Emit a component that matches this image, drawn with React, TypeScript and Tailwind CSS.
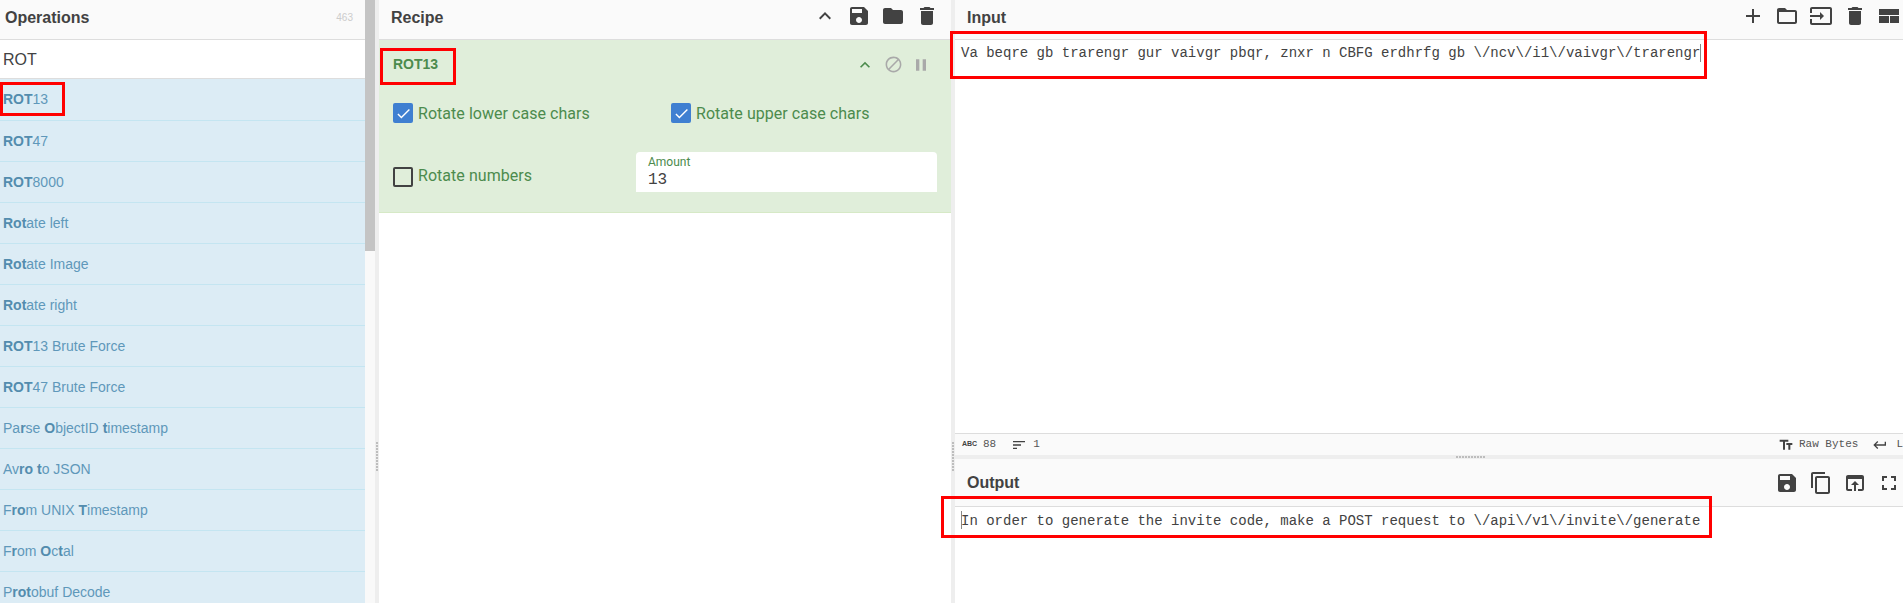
import React from "react";

const P = {
  save: "M17 3H5c-1.11 0-2 .9-2 2v14c0 1.1.89 2 2 2h14c1.1 0 2-.9 2-2V7l-4-4zm-5 16c-1.66 0-3-1.34-3-3s1.34-3 3-3 3 1.34 3 3-1.34 3-3 3zm3-10H5V5h10v4z",
  folder: "M10 4H4c-1.1 0-1.99.9-1.99 2L2 18c0 1.1.9 2 2 2h16c1.1 0 2-.9 2-2V8c0-1.1-.9-2-2-2h-8l-2-2z",
  del: "M6 19c0 1.1.9 2 2 2h8c1.1 0 2-.9 2-2V7H6v12zM19 4h-3.5l-1-1h-5l-1 1H5v2h14V4z",
  less: "M12 8l-6 6 1.41 1.41L12 10.83l4.59 4.58L18 14z",
  block: "M12 2C6.48 2 2 6.48 2 12s4.48 10 10 10 10-4.48 10-10S17.52 2 12 2zM4 12c0-4.42 3.58-8 8-8 1.85 0 3.55.63 4.9 1.69L5.69 16.9C4.63 15.55 4 13.85 4 12zm8 8c-1.85 0-3.55-.63-4.9-1.69L18.31 7.1C19.37 8.45 20 10.15 20 12c0 4.42-3.58 8-8 8z",
  pause: "M6 19h4V5H6v14zm8-14v14h4V5h-4z",
  add: "M19 13h-6v6h-2v-6H5v-2h6V5h2v6h6v2z",
  open: "M20 6h-8l-2-2H4c-1.1 0-1.99.9-1.99 2L2 18c0 1.1.9 2 2 2h16c1.1 0 2-.9 2-2V8c0-1.1-.9-2-2-2zm0 12H4V8h16v10z",
  input: "M21 3.01H3c-1.1 0-2 .9-2 2V9h2V4.99h18v14.03H3V15H1v4.01c0 1.1.9 1.98 2 1.98h18c1.1 0 2-.88 2-1.98v-14c0-1.11-.9-2-2-2zM11 16l4-4-4-4v3H1v2h10v3z",
  layout: "M2 5h20v6H2zM2 12h10v7H2zM13 12h9v7h-9z",
  copy: "M16 1H4c-1.1 0-2 .9-2 2v14h2V3h12V1zm3 4H8c-1.1 0-2 .9-2 2v14c0 1.1.9 2 2 2h11c1.1 0 2-.9 2-2V7c0-1.1-.9-2-2-2zm0 16H8V7h11v14z",
  browser: "M19 4H5c-1.11 0-2 .9-2 2v12c0 1.1.89 2 2 2h4v-2H5V8h14v10h-4v2h4c1.1 0 2-.9 2-2V6c0-1.1-.89-2-2-2zm-7 6l-4 4h3v6h2v-6h3l-4-4z",
  full: "M7 14H5v5h5v-2H7v-3zm-2-4h2V7h3V5H5v5zm12 7h-3v2h5v-5h-2v3zM14 5v2h3v3h2V5h-5z",
  text: "M2.5 4v3h5v12h3V7h5V4h-13zm19 5h-9v3h3v7h3v-7h3V9z",
  ret: "M19 7v4H5.83l3.58-3.59L8 6l-6 6 6 6 1.41-1.41L5.83 13H21V7z",
  sort: "M3 18h6v-2H3v2zM3 6v2h18V6H3zm0 7h12v-2H3v2z",
  check: "M9 16.17L4.83 12l-1.42 1.41L9 19 21 7l-1.41-1.41z",
};

function Icon({ d, size = 24, className = "" }: { d: string; size?: number; className?: string }) {
  return (
    <svg width={size} height={size} viewBox="0 0 24 24" fill="currentColor" className={"shrink-0 " + className}>
      <path d={d} />
    </svg>
  );
}

function Btn({ d }: { d: string }) {
  return (
    <span className="flex w-[34px] justify-center text-[#424242]">
      <Icon d={d} />
    </span>
  );
}

const rows: [string, boolean][][] = [
  [["ROT", true], ["13", false]],
  [["ROT", true], ["47", false]],
  [["ROT", true], ["8000", false]],
  [["Rot", true], ["ate left", false]],
  [["Rot", true], ["ate Image", false]],
  [["Rot", true], ["ate right", false]],
  [["ROT", true], ["13 Brute Force", false]],
  [["ROT", true], ["47 Brute Force", false]],
  [["Pa", false], ["r", true], ["se ", false], ["O", true], ["bjectID ", false], ["t", true], ["imestamp", false]],
  [["Av", false], ["ro", true], [" ", false], ["t", true], ["o JSON", false]],
  [["F", false], ["ro", true], ["m UNIX ", false], ["T", true], ["imestamp", false]],
  [["F", false], ["r", true], ["om ", false], ["O", true], ["c", false], ["t", true], ["al", false]],
  [["P", false], ["rot", true], ["obuf Decode", false]],
];

const dotsV =
  "w-[2px] h-[30px] bg-[repeating-linear-gradient(to_bottom,#bdbdbd_0,#bdbdbd_2px,transparent_2px,transparent_3px)]";

function VGutter() {
  return (
    <div className="flex w-[4px] shrink-0 justify-center bg-[#eeeeee] pt-[442px]">
      <div className={dotsV} />
    </div>
  );
}

function Check({ on }: { on: boolean }) {
  return on ? (
    <span className="flex h-[20px] w-[20px] items-center justify-center rounded-[2px] bg-[#3f7fd1] text-white">
      <Icon d={P.check} size={17} />
    </span>
  ) : (
    <span className="h-[20px] w-[20px] rounded-[2px] border-2 border-[#424242]" />
  );
}

function Header({ title, className = "" }: { title: string; className?: string }) {
  return <span className={"text-[16px] font-bold text-[#424242] " + className}>{title}</span>;
}

export default function App() {
  return (
    <div className="relative flex h-[603px] w-[1903px] overflow-hidden bg-white font-['Liberation_Sans',sans-serif]">
      {/* Operations */}
      <div className="flex w-[375px] shrink-0">
        <div className="flex w-[365px] flex-col">
          <div className="flex h-[40px] items-center justify-between border-b border-[#dddddd] bg-[#fafafa] pb-[4px] pl-[5px] pr-[12px]">
            <Header title="Operations" />
            <span className="text-[10px] text-[#cccccc]">463</span>
          </div>
          <div className="flex h-[39px] items-center border-b border-[#dddddd] pl-[3px] pt-[2px] text-[16px] text-[#424242]">ROT</div>
          <div className="flex-1 overflow-hidden bg-[#dcecf5]">
            {rows.map((r, i) => (
              <div
                key={i}
                className={
                  "flex items-center whitespace-pre border-b border-[#c4e5f1] pl-[3px] text-[14px] text-[#5f98ba] " +
                  (i === 0 ? "h-[42px]" : "h-[41px]")
                }
              >
                {r.map(([t, b], j) => (
                  <span key={j} className={b ? "font-bold text-[#538cae]" : ""}>
                    {t}
                  </span>
                ))}
              </div>
            ))}
          </div>
        </div>
        <div className="w-[10px] bg-[#f9f9f9]">
          <div className="h-[251px] bg-[#c4c4c4]" />
        </div>
      </div>
      <VGutter />

      {/* Recipe */}
      <div className="flex w-[572px] shrink-0 flex-col">
        <div className="flex h-[40px] items-center justify-between border-b border-[#dddddd] bg-[#fafafa] pb-[4px] pl-[12px] pr-[7px]">
          <Header title="Recipe" />
          <div className="-mt-[3px] flex">
            <Btn d={P.less} />
            <Btn d={P.save} />
            <Btn d={P.folder} />
            <Btn d={P.del} />
          </div>
        </div>
        <div className="h-[173px] border-b border-[#d6e9c6] bg-[#e0eeda] pl-[14px] pr-[14px] text-[#4c8b4d] font-['Roboto',sans-serif]">
          <div className="flex h-[49px] items-center justify-between pr-[2px]">
            <span className="font-['Liberation_Sans',sans-serif] text-[14px] font-bold">ROT13</span>
            <div className="flex items-center">
              <span className="flex w-[28px] justify-center">
                <Icon d={P.less} size={20} />
              </span>
              <span className="flex w-[28px] justify-center text-[#a9a9a9]">
                <Icon d={P.block} size={19} />
              </span>
              <span className="flex w-[28px] justify-center text-[#a9a9a9]">
                <Icon d={P.pause} size={20} />
              </span>
            </div>
          </div>
          <div className="mt-[14px] flex h-[20px] items-center text-[16px] tracking-[0.04px]">
            <span className="flex w-[278px] items-center gap-[5px]">
              <Check on />
              <span className="pt-[1px]">Rotate lower case chars</span>
            </span>
            <span className="flex items-center gap-[5px]">
              <Check on />
              <span className="pt-[1px]">Rotate upper case chars</span>
            </span>
          </div>
          <div className="mt-[29px] flex h-[40px] items-start text-[16px] tracking-[0.04px]">
            <span className="mt-[13px] flex w-[243px] items-center gap-[5px]">
              <Check on={false} />
              <span className="-mt-[1px]">Rotate numbers</span>
            </span>
            <div className="flex h-[40px] w-[301px] flex-col rounded-t-[4px] bg-white pl-[12px] pt-[3px] tracking-normal">
              <span className="text-[12px] leading-[14px]">Amount</span>
              <span className="mt-[1px] font-['Liberation_Mono',monospace] text-[16px] leading-[20px] text-[#424242]">13</span>
            </div>
          </div>
        </div>
      </div>
      <VGutter />

      {/* Input + Output */}
      <div className="flex min-w-0 flex-1 flex-col">
        <div className="flex h-[40px] shrink-0 items-center justify-between border-b border-[#dddddd] bg-[#fafafa] pb-[4px] pl-[12px]">
          <Header title="Input" />
          <div className="-mr-[3px] -mt-[3px] flex">
            <Btn d={P.add} />
            <Btn d={P.open} />
            <Btn d={P.input} />
            <Btn d={P.del} />
            <Btn d={P.layout} />
          </div>
        </div>
        <div className="flex h-[393px] shrink-0 items-start pl-[6px] pt-[4px] font-['Liberation_Mono',monospace] text-[14px] leading-[18px] text-[#424242]">
          <span className="whitespace-pre">{"Va beqre gb trarengr gur vaivgr pbqr, znxr n CBFG erdhrfg gb \\/ncv\\/i1\\/vaivgr\\/trarengr"}</span>
          <span className="h-[18px] w-px bg-[#888888]" />
        </div>
        <div className="flex h-[22px] shrink-0 items-center justify-between overflow-hidden border-t border-[#dddddd] bg-[#fafafa] pl-[7px] font-['Liberation_Mono',monospace] text-[11px] text-[#555555]">
          <div className="flex items-center">
            <span className="w-[21px] font-['Liberation_Sans',sans-serif] text-[7px] font-bold text-[#424242]">ABC</span>
            <span>88</span>
            <Icon d={P.sort} size={16} className="ml-[15px] text-[#424242]" />
            <span className="ml-[6px]">1</span>
          </div>
          <div className="flex items-center">
            <Icon d={P.text} size={16} className="text-[#424242]" />
            <span className="ml-[5px]">Raw Bytes</span>
            <Icon d={P.ret} size={16} className="ml-[14px] text-[#424242]" />
            <span className="ml-[8px]">L</span>
          </div>
        </div>
        <div className="flex h-[4px] shrink-0 items-center justify-center bg-[#eeeeee] pl-[516px] pr-[453px]">
          <div className="h-[2px] w-[30px] shrink-0 bg-[repeating-linear-gradient(to_right,#bdbdbd_0,#bdbdbd_2px,transparent_2px,transparent_3px)]" />
        </div>
        <div className="flex h-[48px] shrink-0 items-center justify-between border-b border-[#dddddd] bg-[#fafafa] pl-[12px]">
          <Header title="Output" />
          <div className="-mr-[3px] flex">
            <Btn d={P.save} />
            <Btn d={P.copy} />
            <Btn d={P.browser} />
            <Btn d={P.full} />
          </div>
        </div>
        <div className="flex flex-1 items-start pl-[6px] pt-[4px] font-['Liberation_Mono',monospace] text-[14px] leading-[18px] text-[#424242]">
          <span className="-mr-px h-[18px] w-px bg-[#888888]" />
          <span className="relative top-[1px] whitespace-pre">{"In order to generate the invite code, make a POST request to \\/api\\/v1\\/invite\\/generate"}</span>
        </div>
      </div>

      {/* Red annotation boxes */}
      <div className="absolute left-0 top-[82px] h-[34px] w-[65px] border-[3px] border-[#ff0000]" />
      <div className="absolute left-[380px] top-[48px] h-[37px] w-[76px] border-[3px] border-[#ff0000]" />
      <div className="absolute left-[950px] top-[31px] h-[48px] w-[757px] border-[3px] border-[#ff0000]" />
      <div className="absolute left-[941px] top-[496px] h-[42px] w-[771px] border-[3px] border-[#ff0000]" />
    </div>
  );
}
